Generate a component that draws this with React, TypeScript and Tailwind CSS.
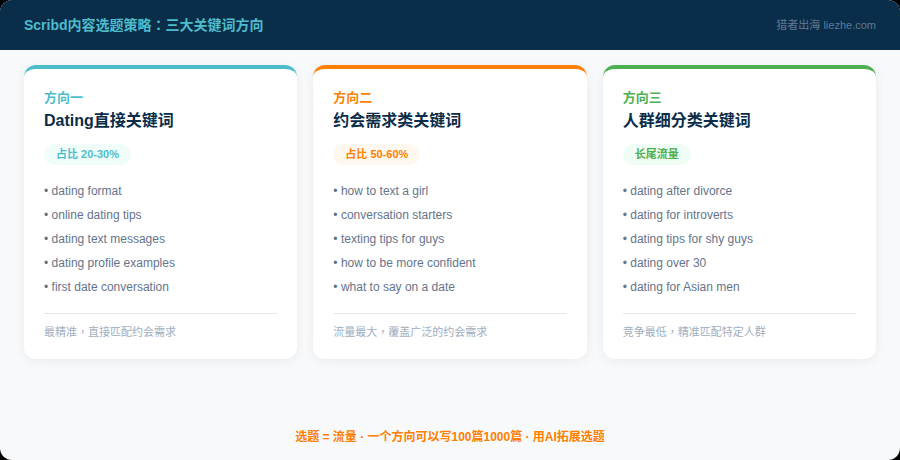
import React from 'react';

const cards = [
    {
        label: '方向一',
        title: 'Dating直接关键词',
        badge: '占比 20-30%',
        border: 'border-t-[#4dbdcc]',
        text: 'text-[#4dbdcc]',
        badgeBg: 'bg-[#f0fdf9]',
        items: ['dating format', 'online dating tips', 'dating text messages', 'dating profile examples', 'first date conversation'],
        note: '最精准，直接匹配约会需求',
    },
    {
        label: '方向二',
        title: '约会需求类关键词',
        badge: '占比 50-60%',
        border: 'border-t-[#ff7f00]',
        text: 'text-[#ff7f00]',
        badgeBg: 'bg-[#fff8f0]',
        items: ['how to text a girl', 'conversation starters', 'texting tips for guys', 'how to be more confident', 'what to say on a date'],
        note: '流量最大，覆盖广泛的约会需求',
    },
    {
        label: '方向三',
        title: '人群细分类关键词',
        badge: '长尾流量',
        border: 'border-t-[#4caf50]',
        text: 'text-[#4caf50]',
        badgeBg: 'bg-[#f0fdf4]',
        items: ['dating after divorce', 'dating for introverts', 'dating tips for shy guys', 'dating over 30', 'dating for Asian men'],
        note: '竞争最低，精准匹配特定人群',
    },
];

const App: React.FC = () => {
    return (
        <div className="w-[900px] h-[460px] bg-black font-['Liberation_Sans','Noto_Sans_CJK_TC',sans-serif]">
            <div className="w-full h-full rounded-xl bg-[#f8f9fb] flex flex-col">
                {/* Header */}
                <div className="h-[50px] shrink-0 rounded-t-xl bg-[#0a2d4a] flex items-center justify-between pl-6 pr-6">
                    <h1 className="text-sm font-bold text-[#4dbdcc]">Scribd内容选题策略：三大关键词方向</h1>
                    <span className="text-[11px] text-[#5f7a94]">猎者出海 liezhe.com</span>
                </div>

                {/* Cards */}
                <div className="flex gap-4 px-6 pt-[15px]">
                    {cards.map((card) => (
                        <div
                            key={card.label}
                            className={`flex-1 h-[294px] bg-white rounded-xl border-t-4 ${card.border} shadow-[0_2px_12px_rgba(0,0,0,0.06)] px-5 pt-[19px]`}
                        >
                            <div className={`text-[13px] font-bold leading-[20px] ${card.text}`}>{card.label}</div>
                            <div className="text-base font-bold leading-[26px] text-[#0a2d4a]">{card.title}</div>
                            <div className={`inline-block mt-[10px] px-3 h-[21px] rounded-full text-[11px] font-bold leading-[21px] ${card.badgeBg} ${card.text}`}>
                                {card.badge}
                            </div>
                            <ul className="mt-[14px]">
                                {card.items.map((item) => (
                                    <li key={item} className="text-xs leading-6 text-[#64748b]">• {item}</li>
                                ))}
                            </ul>
                            <div className="mt-[14px] pt-[10px] border-t border-[#e2e8f0] text-[11px] leading-[16px] text-[#a0aec0]">
                                {card.note}
                            </div>
                        </div>
                    ))}
                </div>

                {/* Footer */}
                <div className="mt-[70px] text-center text-xs font-bold leading-4 text-[#ff7f00]">
                    选题 = 流量 · 一个方向可以写100篇1000篇 · 用AI拓展选题
                </div>
            </div>
        </div>
    );
};

export default App;
